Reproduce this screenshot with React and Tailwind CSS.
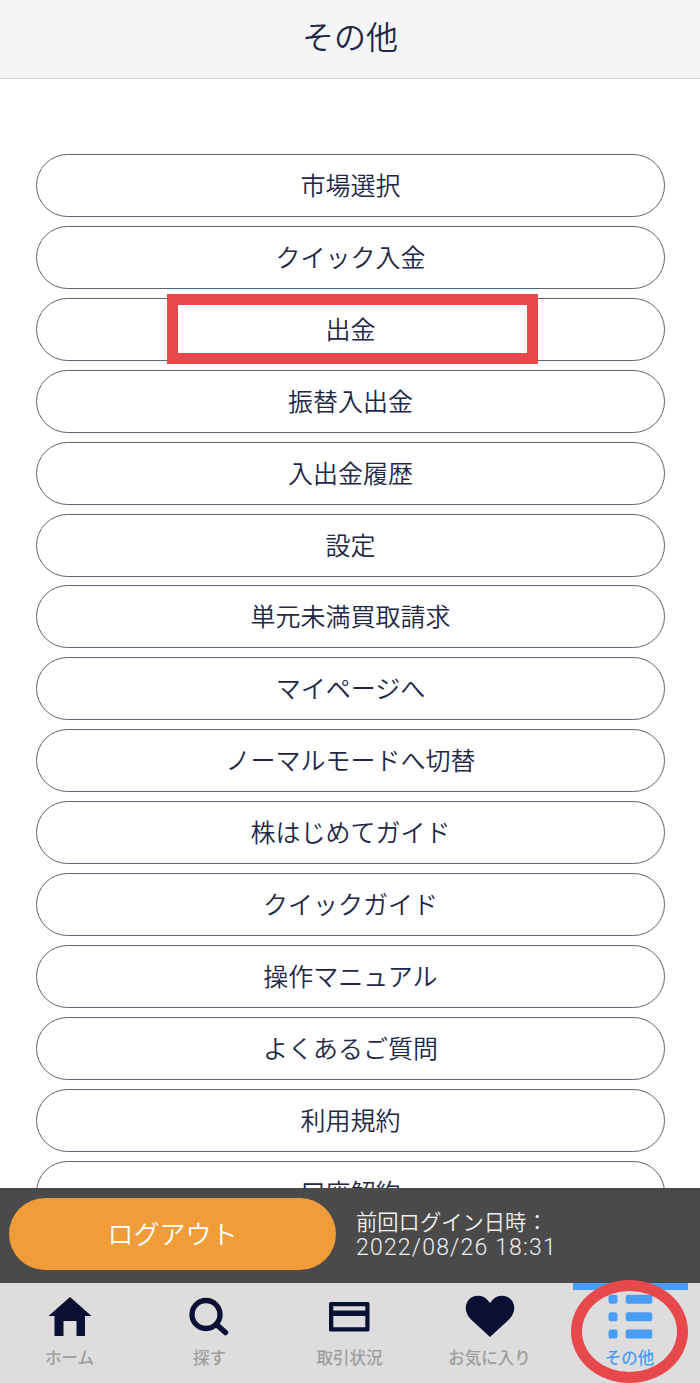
const items = [
  '市場選択',
  'クイック入金',
  '出金',
  '振替入出金',
  '入出金履歴',
  '設定',
  '単元未満買取請求',
  'マイページへ',
  'ノーマルモードへ切替',
  '株はじめてガイド',
  'クイックガイド',
  '操作マニュアル',
  'よくあるご質問',
  '利用規約',
  '口座解約',
];

function HomeIcon() {
  return (
    <svg className="h-[46px] w-[46px]" viewBox="0 0 46 46" fill="currentColor">
      <path d="M23 3 L44.5 22 H38 V42 H29.500 V27 H16.500 V42 H7.500 V22 H1.500 Z" />
    </svg>
  );
}

function SearchIcon() {
  return (
    <svg className="h-[46px] w-[46px]" viewBox="0 0 46 46" fill="none" stroke="currentColor">
      <circle cx="19" cy="20.500" r="14" strokeWidth="5.300" />
      <path d="M29.500 30.500 L38.500 38.500" strokeWidth="5.500" strokeLinecap="round" />
    </svg>
  );
}

function CardIcon() {
  return (
    <svg className="h-[46px] w-[46px]" viewBox="0 0 46 46">
      <path
        fill="currentColor"
        fillRule="evenodd"
        d="M3.500 8 H41 Q42.500 8 42.500 9.500 V36 Q42.500 37.500 41 37.500 H3.500 Q2 37.500 2 36 V9.500 Q2 8 3.500 8 Z M6.300 12.200 V16.500 H38.300 V12.200 Z M6.300 22 V33.300 H38.300 V22 Z"
      />
    </svg>
  );
}

function HeartIcon() {
  return (
    <svg className="h-[46px] w-[50px]" viewBox="0 0 50 46" fill="currentColor">
      <path d="M25 43 L6 25.500 C-.5 19 -.5 11 3.500 6 C8.500 .4 17.500 .4 22.500 6 L25 9 L27.500 6 C32.500 .4 41.500 .4 46.500 6 C50.500 11 50.500 19 44 25.500 Z" />
    </svg>
  );
}

function ListIcon() {
  return (
    <svg className="h-[46px] w-[46px]" viewBox="0 0 46 46" fill="currentColor">
      <rect x="1.500" y="0.800" width="9" height="9" rx="2.200" />
      <rect x="18.700" y="0.800" width="26.600" height="9" rx="2.200" />
      <rect x="1.500" y="18.200" width="9" height="9" rx="2.200" />
      <rect x="18.700" y="18.200" width="26.600" height="9" rx="2.200" />
      <rect x="1.500" y="35.600" width="9" height="9" rx="2.200" />
      <rect x="18.700" y="35.600" width="26.600" height="9" rx="2.200" />
    </svg>
  );
}

const tabs = [
  { label: 'ホーム', Icon: HomeIcon },
  { label: '探す', Icon: SearchIcon },
  { label: '取引状況', Icon: CardIcon },
  { label: 'お気に入り', Icon: HeartIcon },
  { label: 'その他', Icon: ListIcon, active: true },
];

export default function App() {
  return (
    <div className="flex h-[1383px] w-[700px] flex-col overflow-hidden bg-white font-['Noto_Sans_CJK_JP',sans-serif] text-[#222745]">
      <header className="flex h-[79px] shrink-0 items-center justify-center border-b border-[#d2d2d3] bg-[#f5f5f8] pb-[8px]">
        <h1 className="text-[32px] leading-none font-[350]">その他</h1>
      </header>

      <main className="flex min-h-0 flex-1 flex-col gap-[8.92px] overflow-hidden pt-[75px] pr-[35px] pl-9">
        {items.map((item) => (
          <button
            key={item}
            className="relative flex h-[63px] shrink-0 items-center justify-center rounded-[32px] border border-[#5f6376] bg-white pb-[2px] text-[25px] leading-none font-[350]"
          >
            {item}
            {item === '出金' && (
              <span className="absolute -top-[5px] left-[130px] h-[70px] w-[371px] border-[11px] border-[#e6484c]" />
            )}
          </button>
        ))}
      </main>

      <section className="flex h-[95px] shrink-0 items-center bg-[#4a4a4a] pb-[3px] pl-[9px]">
        <button className="flex h-[72px] w-[327px] items-center justify-center rounded-full bg-[#f09c38] pb-[3px] text-[26px] leading-none font-[350] text-white">
          ログアウト
        </button>
        <div className="ml-5 pt-[3px] text-[#efefef]">
          <p className="text-[21.300px] leading-[22px] font-[350]">前回ログイン日時：</p>
          <p className="mt-[2px] font-[Roboto,sans-serif] text-[23px] leading-[27px] font-light tracking-[1.200px]">
            2022/08/26 18:31
          </p>
        </div>
      </section>

      <nav className="grid h-[100px] shrink-0 grid-cols-5 bg-[#dddddd]">
        {tabs.map(({ label, Icon, active }) => (
          <div
            key={label}
            className={
              active
                ? 'relative flex flex-col items-center pt-[11px] text-[#4a9df5]'
                : 'flex flex-col items-center pt-[11px] text-[#091034]'
            }
          >
            {active && <span className="absolute top-0 left-[13px] h-[7px] w-[115px] bg-[#4a9df5]" />}
            <Icon />
            <span
              className={
                active
                  ? 'mt-[9px] mr-[1px] text-[16.500px] leading-[17px] font-medium'
                  : 'mt-[9px] mr-[1px] text-[16.500px] leading-[17px] font-medium text-[#9e9e9e]'
              }
            >
              {label}
            </span>
            {active && (
              <span className="absolute -top-[3px] left-[11px] h-[103px] w-[117px] rounded-[50%] border-[11px] border-[#e6484c]" />
            )}
          </div>
        ))}
      </nav>
    </div>
  );
}
